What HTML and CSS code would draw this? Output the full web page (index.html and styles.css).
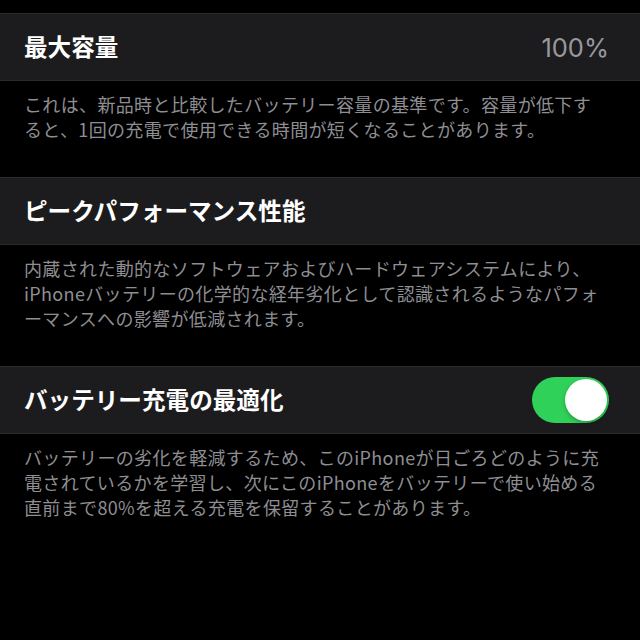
FILE: index.html
```html
<!DOCTYPE html>
<html lang="ja">
<head>
<meta charset="utf-8">
<link rel="stylesheet" href="styles.css">
</head>
<body>
<div class="page">
  <section class="group">
    <div class="row">
      <span class="title">最大容量</span>
      <span class="value">100%</span>
    </div>
    <p class="footer">これは、新品時と比較したバッテリー容量の基準です。容量が低下す<br>ると、1回の充電で使用できる時間が短くなることがあります。</p>
  </section>
  <section class="group">
    <div class="row">
      <span class="title">ピークパフォーマンス性能</span>
    </div>
    <p class="footer">内蔵された動的なソフトウェアおよびハードウェアシステムにより、<br>iPhoneバッテリーの化学的な経年劣化として認識されるようなパフォ<br>ーマンスへの影響が低減されます。</p>
  </section>
  <section class="group">
    <div class="row">
      <span class="title">バッテリー充電の最適化</span>
      <span class="toggle on"><span class="knob"></span></span>
    </div>
    <p class="footer">バッテリーの劣化を軽減するため、このiPhoneが日ごろどのように充<br>電されているかを学習し、次にこのiPhoneをバッテリーで使い始める<br>直前まで80%を超える充電を保留することがあります。</p>
  </section>
</div>
</body>
</html>
```

FILE: styles.css
```css
html, body {
  margin: 0;
  padding: 0;
  background: #000;
}
body {
  width: 640px;
  height: 640px;
  overflow: hidden;
  font-family: "Noto Sans CJK JP", "Noto Sans", sans-serif;
}
.page {
  padding-top: 13px;
  display: flex;
  flex-direction: column;
}
.group {
  display: flex;
  flex-direction: column;
}
.row {
  box-sizing: border-box;
  height: 68px;
  background: #1c1c1e;
  border-top: 1px solid #2a2a2c;
  border-bottom: 1px solid #2a2a2c;
  display: flex;
  align-items: center;
  justify-content: space-between;
  padding: 0 31px 0 24px;
}
.title {
  color: #fff;
  font-size: 23.6px;
  font-weight: 700;
  line-height: 1;
}
.value {
  color: #98989d;
  font-family: "Inter", "Liberation Sans", sans-serif;
  font-size: 25.5px;
  font-weight: 400;
  margin-right: 0;
}
.toggle {
  width: 77px;
  height: 46px;
  border-radius: 23px;
  background: #30d158;
  display: flex;
  align-items: center;
  justify-content: flex-end;
  padding: 0 2px;
  box-sizing: border-box;
}
.knob {
  width: 42px;
  height: 42px;
  border-radius: 50%;
  background: #fff;
  box-shadow: 0 2px 4px rgba(0,0,0,0.25);
}
.footer {
  margin: 0;
  padding: 11px 24px 35px 24px;
  color: #8e8e93;
  font-size: 18px;
  letter-spacing: 0.35px;
  line-height: 25px;
  white-space: nowrap;
}
```
